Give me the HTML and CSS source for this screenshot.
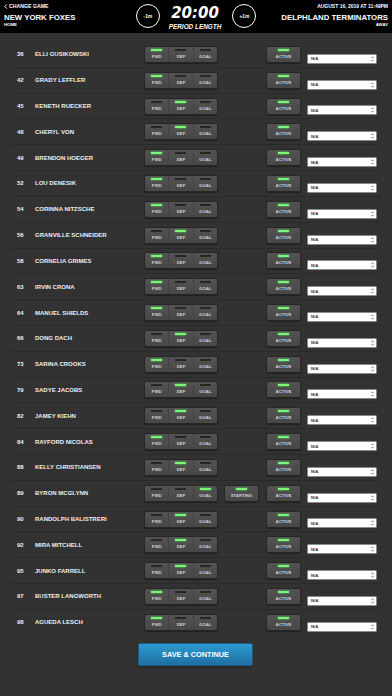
FILE: index.html
```html
<!DOCTYPE html>
<html>
<head>
<meta charset="utf-8">
<link rel="stylesheet" href="styles.css">
</head>
<body>
<div class="header">
  <div class="team home">
    <div class="back"><svg class="chev" width="4" height="5" viewBox="0 0 4 5"><path d="M2.8 0.4 L0.8 2.5 L2.8 4.6" fill="none" stroke="#fff" stroke-width="1"/></svg>CHANGE GAME</div>
    <div class="team-name">NEW YORK FOXES</div>
    <div class="team-side">HOME</div>
  </div>
  <div class="clock">
    <div class="adj">-1m</div>
    <div class="time"><div class="time-val">20:00</div><div class="time-label">PERIOD LENGTH</div></div>
    <div class="adj">+1m</div>
  </div>
  <div class="team away">
    <div class="date">AUGUST 16, 2019 AT 11:49PM</div>
    <div class="team-name">DELPHLAND TERMINATORS</div>
    <div class="team-side">AWAY</div>
  </div>
</div>
<div class="list">
  <div class="row"><span class="num">36</span><span class="name">ELLI GUSIKOWSKI</span><div class="pos"><div class="seg on"><i></i>FWD</div><div class="seg"><i></i>DEF</div><div class="seg"><i></i>GOAL</div></div><div class="slot"></div><div class="btn on"><i></i>ACTIVE</div><div class="select"><span>N/A</span><svg width="3" height="6" viewBox="0 0 3 6"><path d="M0.3 2.2 L1.5 0.8 L2.7 2.2 M0.3 3.8 L1.5 5.2 L2.7 3.8" fill="none" stroke="#555" stroke-width="0.7"/></svg></div></div>
  <div class="row"><span class="num">42</span><span class="name">GRADY LEFFLER</span><div class="pos"><div class="seg on"><i></i>FWD</div><div class="seg"><i></i>DEF</div><div class="seg"><i></i>GOAL</div></div><div class="slot"></div><div class="btn on"><i></i>ACTIVE</div><div class="select"><span>N/A</span><svg width="3" height="6" viewBox="0 0 3 6"><path d="M0.3 2.2 L1.5 0.8 L2.7 2.2 M0.3 3.8 L1.5 5.2 L2.7 3.8" fill="none" stroke="#555" stroke-width="0.7"/></svg></div></div>
  <div class="row"><span class="num">45</span><span class="name">KENETH RUECKER</span><div class="pos"><div class="seg"><i></i>FWD</div><div class="seg on"><i></i>DEF</div><div class="seg"><i></i>GOAL</div></div><div class="slot"></div><div class="btn on"><i></i>ACTIVE</div><div class="select"><span>N/A</span><svg width="3" height="6" viewBox="0 0 3 6"><path d="M0.3 2.2 L1.5 0.8 L2.7 2.2 M0.3 3.8 L1.5 5.2 L2.7 3.8" fill="none" stroke="#555" stroke-width="0.7"/></svg></div></div>
  <div class="row"><span class="num">48</span><span class="name">CHERYL VON</span><div class="pos"><div class="seg"><i></i>FWD</div><div class="seg on"><i></i>DEF</div><div class="seg"><i></i>GOAL</div></div><div class="slot"></div><div class="btn on"><i></i>ACTIVE</div><div class="select"><span>N/A</span><svg width="3" height="6" viewBox="0 0 3 6"><path d="M0.3 2.2 L1.5 0.8 L2.7 2.2 M0.3 3.8 L1.5 5.2 L2.7 3.8" fill="none" stroke="#555" stroke-width="0.7"/></svg></div></div>
  <div class="row"><span class="num">49</span><span class="name">BRENDON HOEGER</span><div class="pos"><div class="seg on"><i></i>FWD</div><div class="seg"><i></i>DEF</div><div class="seg"><i></i>GOAL</div></div><div class="slot"></div><div class="btn on"><i></i>ACTIVE</div><div class="select"><span>N/A</span><svg width="3" height="6" viewBox="0 0 3 6"><path d="M0.3 2.2 L1.5 0.8 L2.7 2.2 M0.3 3.8 L1.5 5.2 L2.7 3.8" fill="none" stroke="#555" stroke-width="0.7"/></svg></div></div>
  <div class="row"><span class="num">52</span><span class="name">LOU DENESIK</span><div class="pos"><div class="seg on"><i></i>FWD</div><div class="seg"><i></i>DEF</div><div class="seg"><i></i>GOAL</div></div><div class="slot"></div><div class="btn on"><i></i>ACTIVE</div><div class="select"><span>N/A</span><svg width="3" height="6" viewBox="0 0 3 6"><path d="M0.3 2.2 L1.5 0.8 L2.7 2.2 M0.3 3.8 L1.5 5.2 L2.7 3.8" fill="none" stroke="#555" stroke-width="0.7"/></svg></div></div>
  <div class="row"><span class="num">54</span><span class="name">CORINNA NITZSCHE</span><div class="pos"><div class="seg on"><i></i>FWD</div><div class="seg"><i></i>DEF</div><div class="seg"><i></i>GOAL</div></div><div class="slot"></div><div class="btn on"><i></i>ACTIVE</div><div class="select"><span>N/A</span><svg width="3" height="6" viewBox="0 0 3 6"><path d="M0.3 2.2 L1.5 0.8 L2.7 2.2 M0.3 3.8 L1.5 5.2 L2.7 3.8" fill="none" stroke="#555" stroke-width="0.7"/></svg></div></div>
  <div class="row"><span class="num">56</span><span class="name">GRANVILLE SCHNEIDER</span><div class="pos"><div class="seg"><i></i>FWD</div><div class="seg on"><i></i>DEF</div><div class="seg"><i></i>GOAL</div></div><div class="slot"></div><div class="btn on"><i></i>ACTIVE</div><div class="select"><span>N/A</span><svg width="3" height="6" viewBox="0 0 3 6"><path d="M0.3 2.2 L1.5 0.8 L2.7 2.2 M0.3 3.8 L1.5 5.2 L2.7 3.8" fill="none" stroke="#555" stroke-width="0.7"/></svg></div></div>
  <div class="row"><span class="num">58</span><span class="name">CORNELIA GRIMES</span><div class="pos"><div class="seg on"><i></i>FWD</div><div class="seg"><i></i>DEF</div><div class="seg"><i></i>GOAL</div></div><div class="slot"></div><div class="btn on"><i></i>ACTIVE</div><div class="select"><span>N/A</span><svg width="3" height="6" viewBox="0 0 3 6"><path d="M0.3 2.2 L1.5 0.8 L2.7 2.2 M0.3 3.8 L1.5 5.2 L2.7 3.8" fill="none" stroke="#555" stroke-width="0.7"/></svg></div></div>
  <div class="row"><span class="num">63</span><span class="name">IRVIN CRONA</span><div class="pos"><div class="seg on"><i></i>FWD</div><div class="seg"><i></i>DEF</div><div class="seg"><i></i>GOAL</div></div><div class="slot"></div><div class="btn on"><i></i>ACTIVE</div><div class="select"><span>N/A</span><svg width="3" height="6" viewBox="0 0 3 6"><path d="M0.3 2.2 L1.5 0.8 L2.7 2.2 M0.3 3.8 L1.5 5.2 L2.7 3.8" fill="none" stroke="#555" stroke-width="0.7"/></svg></div></div>
  <div class="row"><span class="num">64</span><span class="name">MANUEL SHIELDS</span><div class="pos"><div class="seg on"><i></i>FWD</div><div class="seg"><i></i>DEF</div><div class="seg"><i></i>GOAL</div></div><div class="slot"></div><div class="btn on"><i></i>ACTIVE</div><div class="select"><span>N/A</span><svg width="3" height="6" viewBox="0 0 3 6"><path d="M0.3 2.2 L1.5 0.8 L2.7 2.2 M0.3 3.8 L1.5 5.2 L2.7 3.8" fill="none" stroke="#555" stroke-width="0.7"/></svg></div></div>
  <div class="row"><span class="num">66</span><span class="name">DONG DACH</span><div class="pos"><div class="seg"><i></i>FWD</div><div class="seg on"><i></i>DEF</div><div class="seg"><i></i>GOAL</div></div><div class="slot"></div><div class="btn on"><i></i>ACTIVE</div><div class="select"><span>N/A</span><svg width="3" height="6" viewBox="0 0 3 6"><path d="M0.3 2.2 L1.5 0.8 L2.7 2.2 M0.3 3.8 L1.5 5.2 L2.7 3.8" fill="none" stroke="#555" stroke-width="0.7"/></svg></div></div>
  <div class="row"><span class="num">73</span><span class="name">SARINA CROOKS</span><div class="pos"><div class="seg on"><i></i>FWD</div><div class="seg"><i></i>DEF</div><div class="seg"><i></i>GOAL</div></div><div class="slot"></div><div class="btn on"><i></i>ACTIVE</div><div class="select"><span>N/A</span><svg width="3" height="6" viewBox="0 0 3 6"><path d="M0.3 2.2 L1.5 0.8 L2.7 2.2 M0.3 3.8 L1.5 5.2 L2.7 3.8" fill="none" stroke="#555" stroke-width="0.7"/></svg></div></div>
  <div class="row"><span class="num">79</span><span class="name">SADYE JACOBS</span><div class="pos"><div class="seg"><i></i>FWD</div><div class="seg on"><i></i>DEF</div><div class="seg"><i></i>GOAL</div></div><div class="slot"></div><div class="btn on"><i></i>ACTIVE</div><div class="select"><span>N/A</span><svg width="3" height="6" viewBox="0 0 3 6"><path d="M0.3 2.2 L1.5 0.8 L2.7 2.2 M0.3 3.8 L1.5 5.2 L2.7 3.8" fill="none" stroke="#555" stroke-width="0.7"/></svg></div></div>
  <div class="row"><span class="num">82</span><span class="name">JAMEY KIEHN</span><div class="pos"><div class="seg"><i></i>FWD</div><div class="seg on"><i></i>DEF</div><div class="seg"><i></i>GOAL</div></div><div class="slot"></div><div class="btn on"><i></i>ACTIVE</div><div class="select"><span>N/A</span><svg width="3" height="6" viewBox="0 0 3 6"><path d="M0.3 2.2 L1.5 0.8 L2.7 2.2 M0.3 3.8 L1.5 5.2 L2.7 3.8" fill="none" stroke="#555" stroke-width="0.7"/></svg></div></div>
  <div class="row"><span class="num">84</span><span class="name">RAYFORD NICOLAS</span><div class="pos"><div class="seg on"><i></i>FWD</div><div class="seg"><i></i>DEF</div><div class="seg"><i></i>GOAL</div></div><div class="slot"></div><div class="btn on"><i></i>ACTIVE</div><div class="select"><span>N/A</span><svg width="3" height="6" viewBox="0 0 3 6"><path d="M0.3 2.2 L1.5 0.8 L2.7 2.2 M0.3 3.8 L1.5 5.2 L2.7 3.8" fill="none" stroke="#555" stroke-width="0.7"/></svg></div></div>
  <div class="row"><span class="num">88</span><span class="name">KELLY CHRISTIANSEN</span><div class="pos"><div class="seg"><i></i>FWD</div><div class="seg on"><i></i>DEF</div><div class="seg"><i></i>GOAL</div></div><div class="slot"></div><div class="btn on"><i></i>ACTIVE</div><div class="select"><span>N/A</span><svg width="3" height="6" viewBox="0 0 3 6"><path d="M0.3 2.2 L1.5 0.8 L2.7 2.2 M0.3 3.8 L1.5 5.2 L2.7 3.8" fill="none" stroke="#555" stroke-width="0.7"/></svg></div></div>
  <div class="row"><span class="num">89</span><span class="name">BYRON MCGLYNN</span><div class="pos"><div class="seg"><i></i>FWD</div><div class="seg"><i></i>DEF</div><div class="seg on"><i></i>GOAL</div></div><div class="btn on starting"><i></i>STARTING</div><div class="btn on"><i></i>ACTIVE</div><div class="select"><span>N/A</span><svg width="3" height="6" viewBox="0 0 3 6"><path d="M0.3 2.2 L1.5 0.8 L2.7 2.2 M0.3 3.8 L1.5 5.2 L2.7 3.8" fill="none" stroke="#555" stroke-width="0.7"/></svg></div></div>
  <div class="row"><span class="num">90</span><span class="name">RANDOLPH BALISTRERI</span><div class="pos"><div class="seg"><i></i>FWD</div><div class="seg on"><i></i>DEF</div><div class="seg"><i></i>GOAL</div></div><div class="slot"></div><div class="btn on"><i></i>ACTIVE</div><div class="select"><span>N/A</span><svg width="3" height="6" viewBox="0 0 3 6"><path d="M0.3 2.2 L1.5 0.8 L2.7 2.2 M0.3 3.8 L1.5 5.2 L2.7 3.8" fill="none" stroke="#555" stroke-width="0.7"/></svg></div></div>
  <div class="row"><span class="num">92</span><span class="name">MIRA MITCHELL</span><div class="pos"><div class="seg"><i></i>FWD</div><div class="seg on"><i></i>DEF</div><div class="seg"><i></i>GOAL</div></div><div class="slot"></div><div class="btn on"><i></i>ACTIVE</div><div class="select"><span>N/A</span><svg width="3" height="6" viewBox="0 0 3 6"><path d="M0.3 2.2 L1.5 0.8 L2.7 2.2 M0.3 3.8 L1.5 5.2 L2.7 3.8" fill="none" stroke="#555" stroke-width="0.7"/></svg></div></div>
  <div class="row"><span class="num">95</span><span class="name">JUNKO FARRELL</span><div class="pos"><div class="seg"><i></i>FWD</div><div class="seg on"><i></i>DEF</div><div class="seg"><i></i>GOAL</div></div><div class="slot"></div><div class="btn on"><i></i>ACTIVE</div><div class="select"><span>N/A</span><svg width="3" height="6" viewBox="0 0 3 6"><path d="M0.3 2.2 L1.5 0.8 L2.7 2.2 M0.3 3.8 L1.5 5.2 L2.7 3.8" fill="none" stroke="#555" stroke-width="0.7"/></svg></div></div>
  <div class="row"><span class="num">97</span><span class="name">BUSTER LANGWORTH</span><div class="pos"><div class="seg on"><i></i>FWD</div><div class="seg"><i></i>DEF</div><div class="seg"><i></i>GOAL</div></div><div class="slot"></div><div class="btn on"><i></i>ACTIVE</div><div class="select"><span>N/A</span><svg width="3" height="6" viewBox="0 0 3 6"><path d="M0.3 2.2 L1.5 0.8 L2.7 2.2 M0.3 3.8 L1.5 5.2 L2.7 3.8" fill="none" stroke="#555" stroke-width="0.7"/></svg></div></div>
  <div class="row last"><span class="num">98</span><span class="name">AGUEDA LESCH</span><div class="pos"><div class="seg on"><i></i>FWD</div><div class="seg"><i></i>DEF</div><div class="seg"><i></i>GOAL</div></div><div class="slot"></div><div class="btn on"><i></i>ACTIVE</div><div class="select"><span>N/A</span><svg width="3" height="6" viewBox="0 0 3 6"><path d="M0.3 2.2 L1.5 0.8 L2.7 2.2 M0.3 3.8 L1.5 5.2 L2.7 3.8" fill="none" stroke="#555" stroke-width="0.7"/></svg></div></div>
</div>
<div class="footer"><div class="save">SAVE &amp; CONTINUE</div></div>
</body>
</html>
```
FILE: styles.css
```css
html, body {
  margin: 0;
  padding: 0;
  background: #323232;
}
body {
  width: 392px;
  height: 696px;
  overflow: hidden;
  font-family: "Liberation Sans", Arial, sans-serif;
  font-weight: bold;
  color: #fff;
}
.header {
  height: 33px;
  background: #000;
  display: grid;
  grid-template-columns: 1fr auto 1fr;
  align-items: start;
}
.team {
  display: flex;
  flex-direction: column;
  padding: 3px 4px 0 4px;
}
.team.away {
  align-items: flex-end;
}
.back {
  display: flex;
  align-items: center;
  font-size: 5.2px;
  line-height: 6px;
  height: 6px;
}
.chev {
  margin-right: 1px;
}
.date {
  font-size: 5px;
  line-height: 6px;
  height: 6px;
}
.team-name {
  font-size: 7.8px;
  line-height: 8px;
  margin-top: 5px;
}
.team-side {
  font-size: 4.3px;
  line-height: 5px;
}
.clock {
  display: flex;
  align-items: center;
  height: 32px;
}
.adj {
  width: 22px;
  height: 22px;
  border: 1px solid #fff;
  border-radius: 50%;
  display: flex;
  align-items: center;
  justify-content: center;
  font-size: 5px;
  font-style: italic;
}
.time {
  display: flex;
  flex-direction: column;
  align-items: center;
  margin: 0 11px 0 9px;
}
.time-val {
  font-family: "DejaVu Sans", sans-serif;
  font-style: italic;
  font-weight: bold;
  font-size: 15px;
  line-height: 15px;
  margin-top: 3px;
}
.time-label {
  font-size: 6.4px;
  font-style: italic;
  line-height: 7px;
  margin-top: 2px;
}
.list {
  padding-top: 9px;
}
.row {
  display: flex;
  align-items: center;
  height: 24.82px;
  margin: 0 11px 0 10px;
  padding-left: 7px;
  border-bottom: 1px solid #2a2a2a;
}
.row.last {
  border-bottom-color: transparent;
}
.num {
  width: 18px;
  font-size: 6px;
  color: #eee;
}
.name {
  width: 109px;
  font-size: 6px;
  color: #eee;
  white-space: nowrap;
}
.pos, .btn {
  box-sizing: border-box;
  height: 17px;
  border: 1px solid #262626;
  border-radius: 2px;
  background: linear-gradient(#535353, #474747);
  box-shadow: 0 1px 1px rgba(0,0,0,0.35);
  color: #d0d0d0;
  font-size: 4.3px;
  line-height: 5px;
}
.pos {
  width: 74px;
  display: flex;
}
.seg {
  flex: 1;
  display: flex;
  flex-direction: column;
  align-items: center;
}
.seg + .seg {
  border-left: 1px solid #424242;
}
.seg i, .btn i {
  display: block;
  width: 11px;
  height: 2px;
  background: #262626;
  margin-top: 2px;
  margin-bottom: 3px;
}
.seg.on i, .btn.on i {
  background: #7af47a;
  box-shadow: 0 0 2px #4dff4d;
}
.slot {
  width: 35px;
  margin-left: 6px;
  height: 17px;
}
.btn {
  width: 35px;
  margin-left: 7px;
  display: flex;
  flex-direction: column;
  align-items: center;
}
.btn.starting {
  margin-left: 6px;
}
.select {
  box-sizing: border-box;
  width: 70px;
  height: 10px;
  margin-left: 6px;
  align-self: flex-end;
  margin-bottom: 3px;
  background: #fff;
  border: 1px solid #8a8a8a;
  border-radius: 1.5px;
  display: flex;
  align-items: center;
  justify-content: space-between;
  padding: 0 2px 0 3px;
  color: #333;
  font-size: 4.3px;
}
.footer {
  display: flex;
  justify-content: center;
  padding-top: 7px;
  padding-right: 1px;
}
.save {
  box-sizing: border-box;
  width: 115px;
  height: 23px;
  border: 1px solid #1b5c88;
  border-radius: 2px;
  background: linear-gradient(#2c9ad2, #1f6e9f);
  box-shadow: 0 1px 2px rgba(0,0,0,0.4);
  display: flex;
  align-items: center;
  justify-content: center;
  font-size: 7.3px;
  color: #fff;
}
```
